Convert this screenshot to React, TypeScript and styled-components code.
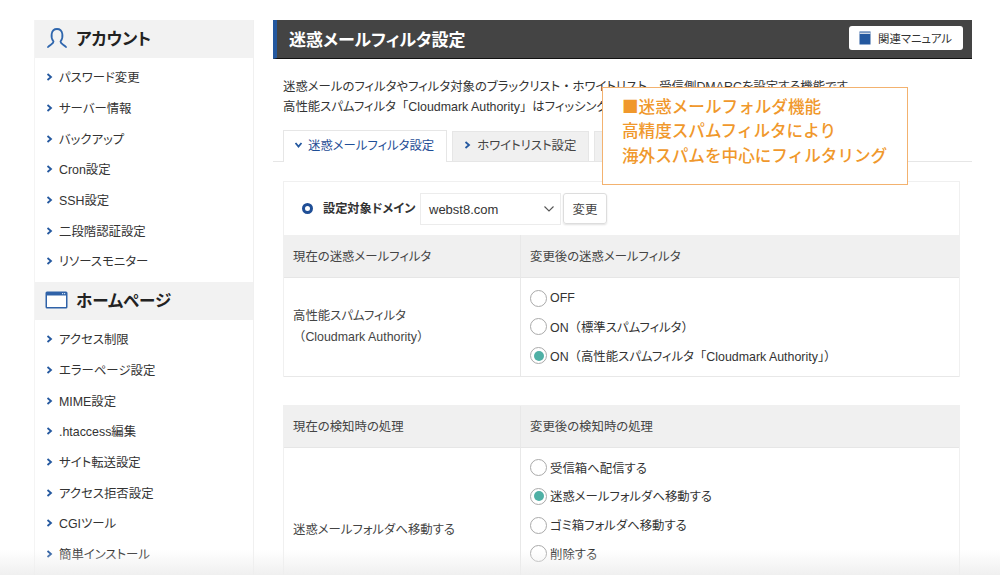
import React from 'react';
import styled, { createGlobalStyle } from 'styled-components';

const GlobalStyle = createGlobalStyle`
  html, body {
    margin: 0;
    padding: 0;
    background: #fff;
  }
  body {
    font-family: "Liberation Sans", "Noto Sans CJK JP", sans-serif;
    font-feature-settings: "palt";
    color: #333;
  }
  * {
    box-sizing: border-box;
  }
`;

const Page = styled.div`
  position: relative;
  width: 1000px;
  height: 575px;
  overflow: hidden;
  display: flex;
  align-items: flex-start;
  padding: 20px 28px 0 34px;
  gap: 19px;
`;

const Sidebar = styled.aside`
  width: 220px;
  flex: none;
  border-right: 1px solid #f0f0f0;
  border-left: 1px solid #f4f4f4;
`;

const SideHeader = styled.div`
  height: 38px;
  background: #f2f2f2;
  display: flex;
  align-items: center;
  gap: 8px;
  padding: 0 0 2px 10px;
  font-size: 16.5px;
  font-weight: 700;
  color: #222;
`;

const IconSlot = styled.span`
  width: 23px;
  display: flex;
  justify-content: center;
`;

const SideList = styled.ul`
  list-style: none;
  margin: 0;
  padding: 4px 0 5.1px;
`;

const SideItem = styled.li`
  height: 30.7px;
  display: flex;
  align-items: center;
  gap: 6px;
  padding-left: 11px;
  font-size: 12.4px;
  color: #333;
`;

const Main = styled.main`
  flex: 1;
  min-width: 0;
`;

const TitleBar = styled.div`
  height: 39px;
  background: #444;
  border-left: 4px solid #24589f;
  border-bottom: 1px solid #111;
  display: flex;
  align-items: center;
  justify-content: space-between;
  padding: 0 9px 2px 12px;
`;

const Title = styled.h1`
  margin: 0;
  font-size: 17px;
  font-weight: 700;
  color: #fff;
`;

const ManualButton = styled.div`
  width: 114px;
  height: 24px;
  background: #fff;
  border-radius: 3px;
  display: flex;
  align-items: center;
  gap: 7px;
  padding: 0 0 1px 10px;
  font-size: 11.4px;
  color: #333;
`;

const Intro = styled.p`
  margin: 19px 0 0 10px;
  font-size: 12.4px;
  line-height: 19.5px;
  white-space: nowrap;
`;

const Tabs = styled.div`
  display: flex;
  gap: 5px;
  height: 32px;
  margin-top: 13px;
  padding-left: 10px;
  border-bottom: 1px solid #e6e6e6;
`;

const Tab = styled.div<{ $active?: boolean }>`
  height: ${(p) => (p.$active ? 32 : 30)}px;
  margin-top: ${(p) => (p.$active ? 0 : 1)}px;
  padding: 0 12px 3px 11px;
  display: flex;
  align-items: center;
  gap: 6px;
  font-size: 12.4px;
  white-space: nowrap;
  color: ${(p) => (p.$active ? '#1f4e96' : '#444')};
  background: ${(p) => (p.$active ? '#fff' : '#f0f0f0')};
  border: 1px solid #e6e6e6;
  border-bottom: none;
`;

const Panel = styled.section`
  margin: 19px 12px 0 10px;
  border: 1px solid #f0f0f0;
  border-bottom: none;
`;

const DomainRow = styled.div`
  height: 53px;
  display: flex;
  align-items: center;
  padding-left: 18px;
`;

const Ring = styled.span`
  width: 11px;
  height: 11px;
  border: 3px solid #1f4e96;
  border-radius: 50%;
  margin-right: 10px;
`;

const DomainLabel = styled.span`
  font-size: 12.2px;
  font-weight: 700;
  width: 97px;
  padding-bottom: 2px;
  white-space: nowrap;
`;

const DomainSelect = styled.div`
  width: 141px;
  height: 32px;
  border: 1px solid #ececec;
  display: flex;
  align-items: center;
  justify-content: space-between;
  padding: 1px 5px 0 8px;
  font-size: 13px;
  color: #333;
`;

const ChangeButton = styled.div`
  width: 44px;
  height: 31px;
  margin-left: 2px;
  border: 1px solid #ddd;
  border-radius: 3px;
  box-shadow: 0 1px 2px rgba(0, 0, 0, 0.12);
  display: flex;
  align-items: center;
  justify-content: center;
  font-size: 12.4px;
  color: #444;
`;

const TableGrid = styled.div<{ $gapTop?: boolean }>`
  display: grid;
  grid-template-columns: 236px 1fr;
  margin: ${(p) => (p.$gapTop ? '28px 12px 0 10px' : 0)};
  border: ${(p) => (p.$gapTop ? '1px solid #f0f0f0' : 'none')};
  border-bottom: ${(p) => (p.$gapTop ? 'none' : '1px solid #e8e8e8')};
`;

const HeadCell = styled.div<{ $h: number }>`
  height: ${(p) => p.$h}px;
  background: #f0f0f0;
  border-bottom: 1px solid #e6e6e6;
  display: flex;
  align-items: center;
  padding: 0 0 1px 9px;
  font-size: 12.4px;
  color: #444;
  & + & {
    border-left: 1px solid #e8e8e8;
  }
`;

const BodyCell = styled.div`
  display: flex;
  align-items: center;
  padding-left: 9px;
  font-size: 12.4px;
  line-height: 21px;
  color: #444;
`;

const OptionCell = styled.div<{ $pad: string }>`
  padding: ${(p) => p.$pad};
  border-left: 1px solid #e8e8e8;
  display: flex;
  flex-direction: column;
  gap: 8.8px;
`;

const Option = styled.div`
  height: 20px;
  display: flex;
  align-items: center;
  gap: 3px;
  font-size: 12.4px;
  color: #333;
  white-space: nowrap;
`;

const OptionLabel = styled.span``;

const Radio = styled.span<{ $on?: boolean }>`
  width: 17px;
  height: 17px;
  flex: none;
  border-radius: 50%;
  border: 1px solid #aaa;
  background: #fff;
  display: flex;
  align-items: center;
  justify-content: center;
  &::after {
    content: '';
    width: 10px;
    height: 10px;
    border-radius: 50%;
    background: ${(p) => (p.$on ? '#4fb0a5' : 'transparent')};
  }
`;

// punctuation stays full width, the reference does not tighten it
const WidePunct = styled.span`
  font-feature-settings: normal;
`;

const Callout = styled.div`
  position: absolute;
  left: 602px;
  top: 87px;
  width: 306px;
  height: 98px;
  background: #fff;
  border: 1px solid #f3b26f;
  padding: 5.5px 0 0 19px;
  font-family: "Noto Sans CJK JP", sans-serif;
  font-feature-settings: normal;
  font-size: 16.6px;
  line-height: 24.5px;
  font-weight: 500;
  color: #f0982c;
  white-space: nowrap;
`;

const BottomFade = styled.div`
  position: absolute;
  left: 0;
  right: 0;
  bottom: 0;
  height: 25px;
  background: linear-gradient(rgba(238, 238, 238, 0), rgba(238, 238, 238, 0.9));
`;

const Chevron = ({ down }: { down?: boolean }) => (
  <svg width="7" height="8" viewBox="0 0 7 8" style={down ? { transform: 'rotate(90deg)' } : undefined}>
    <path d="M1.5 1 L5 4 L1.5 7" fill="none" stroke="#24589f" strokeWidth="1.8" />
  </svg>
);

const UserIcon = () => (
  <svg width="22" height="22" viewBox="0 0 22 22">
    <path
      d="M7.5 14.5 C4.5 11 4.5 2 11 2 C17.5 2 17.5 11 14.5 14.5 C14.5 17 18 17.5 20 20 M7.5 14.5 C7.5 17 4 17.5 2 20"
      fill="none"
      stroke="#2f66ad"
      strokeWidth="1.8"
      strokeLinecap="round"
    />
  </svg>
);

const WindowIcon = () => (
  <svg width="23" height="18" viewBox="0 0 23 18">
    <rect x="0.5" y="0.5" width="22" height="17" rx="1.5" fill="#2f62a8" />
    <rect x="2" y="4.5" width="19" height="11.5" fill="#fff" />
    <rect x="17" y="2" width="1.2" height="1.2" fill="#cfe0f5" />
    <rect x="19" y="2" width="1.2" height="1.2" fill="#cfe0f5" />
  </svg>
);

const BookIcon = () => (
  <svg width="12" height="14" viewBox="0 0 12 14">
    <rect x="0.5" y="0.5" width="11" height="13" fill="#24589f" />
    <rect x="0.5" y="1.5" width="11" height="1.5" fill="#cfd8e6" />
  </svg>
);

const SelectArrow = () => (
  <svg width="12" height="8" viewBox="0 0 12 8">
    <path d="M1.5 1.5 L6 6 L10.5 1.5" fill="none" stroke="#555" strokeWidth="1.1" />
  </svg>
);

const accountItems = ['パスワード変更', 'サーバー情報', 'バックアップ', 'Cron設定', 'SSH設定', '二段階認証設定', 'リソースモニター'];
const homeItems = ['アクセス制限', 'エラーページ設定', 'MIME設定', '.htaccess編集', 'サイト転送設定', 'アクセス拒否設定', 'CGIツール', '簡単インストール'];
const filterOptions = ['OFF', 'ON（標準スパムフィルタ）', 'ON（高性能スパムフィルタ「Cloudmark Authority」）'];
const actionOptions = ['受信箱へ配信する', '迷惑メールフォルダへ移動する', 'ゴミ箱フォルダへ移動する', '削除する'];

function Text({ children }: { children: string }) {
  return (
    <>
      {children.split(/([（）「」・、。])/).map((part, i) =>
        i % 2 === 1 ? <WidePunct key={i}>{part}</WidePunct> : part
      )}
    </>
  );
}

function SideGroup({ icon, title, items }: { icon: React.ReactNode; title: string; items: string[] }) {
  return (
    <>
      <SideHeader>
        <IconSlot>{icon}</IconSlot>
        {title}
      </SideHeader>
      <SideList>
        {items.map((item) => (
          <SideItem key={item}>
            <Chevron />
            {item}
          </SideItem>
        ))}
      </SideList>
    </>
  );
}

function Options({ items, selected, pad }: { items: string[]; selected: number; pad: string }) {
  return (
    <OptionCell $pad={pad}>
      {items.map((item, i) => (
        <Option key={item}>
          <Radio $on={i === selected} />
          <OptionLabel>
            <Text>{item}</Text>
          </OptionLabel>
        </Option>
      ))}
    </OptionCell>
  );
}

export default function App() {
  return (
    <>
      <GlobalStyle />
      <Page>
        <Sidebar>
          <SideGroup icon={<UserIcon />} title="アカウント" items={accountItems} />
          <SideGroup icon={<WindowIcon />} title="ホームページ" items={homeItems} />
        </Sidebar>
        <Main>
          <TitleBar>
            <Title>迷惑メールフィルタ設定</Title>
            <ManualButton>
              <BookIcon />
              関連マニュアル
            </ManualButton>
          </TitleBar>
          <Intro>
            <Text>迷惑メールのフィルタやフィルタ対象のブラックリスト・ホワイトリスト、受信側DMARCを設定する機能です。</Text>
            <br />
            <Text>高性能スパムフィルタ「Cloudmark Authority」はフィッシングメールにも対応しています。</Text>
          </Intro>
          <Tabs>
            <Tab $active>
              <Chevron down />
              迷惑メールフィルタ設定
            </Tab>
            <Tab>
              <Chevron />
              ホワイトリスト設定
            </Tab>
            <Tab>
              <Chevron />
              ブラックリスト設定
            </Tab>
          </Tabs>
          <Panel>
            <DomainRow>
              <Ring />
              <DomainLabel>設定対象ドメイン</DomainLabel>
              <DomainSelect>
                webst8.com
                <SelectArrow />
              </DomainSelect>
              <ChangeButton>変更</ChangeButton>
            </DomainRow>
            <TableGrid>
              <HeadCell $h={43}>現在の迷惑メールフィルタ</HeadCell>
              <HeadCell $h={43}>変更後の迷惑メールフィルタ</HeadCell>
              <BodyCell>
                <span>
                  高性能スパムフィルタ
                  <br />
                  <Text>（Cloudmark Authority）</Text>
                </span>
              </BodyCell>
              <Options items={filterOptions} selected={2} pad="10px 0 10px 9px" />
            </TableGrid>
          </Panel>
          <TableGrid $gapTop>
            <HeadCell $h={42}>現在の検知時の処理</HeadCell>
            <HeadCell $h={42}>変更後の検知時の処理</HeadCell>
            <BodyCell>迷惑メールフォルダへ移動する</BodyCell>
            <Options items={actionOptions} selected={1} pad="10px 0 50px 9px" />
          </TableGrid>
        </Main>
        <Callout>
          ■迷惑メールフォルダ機能
          <br />
          高精度スパムフィルタにより
          <br />
          海外スパムを中心にフィルタリング
        </Callout>
        <BottomFade />
      </Page>
    </>
  );
}
